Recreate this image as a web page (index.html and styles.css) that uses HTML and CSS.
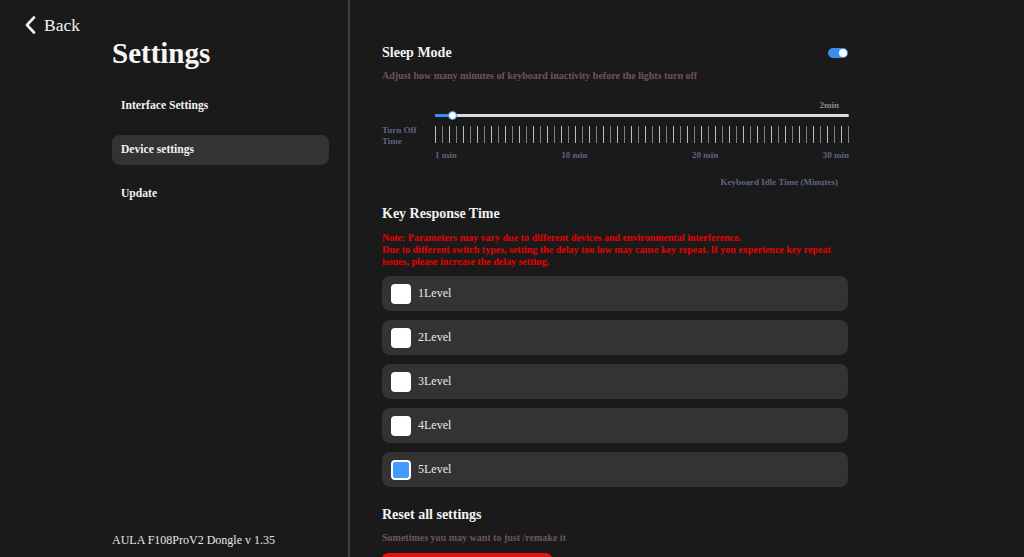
FILE: index.html
```html
<!DOCTYPE html>
<html lang="en">
<head>
<meta charset="utf-8">
<title>Settings</title>
<link rel="stylesheet" href="styles.css">
</head>
<body>
<div class="app">
  <aside class="sidebar">
    <a class="back">
      <svg class="back-icon" width="12" height="18" viewBox="0 0 12 18"><path d="M10 1.5 L3 9 L10 16.5" fill="none" stroke="#f2f2f2" stroke-width="2.6" stroke-linecap="round" stroke-linejoin="round"/></svg>
      <span>Back</span>
    </a>
    <div class="side-col">
      <h1 class="side-title">Settings</h1>
      <nav class="menu">
        <div class="menu-item">Interface Settings</div>
        <div class="menu-item active">Device settings</div>
        <div class="menu-item">Update</div>
      </nav>
    </div>
    <div class="version">AULA F108ProV2 Dongle v 1.35</div>
  </aside>
  <main class="content">
    <section class="section">
      <div class="section-head">
        <h2 class="section-title">Sleep Mode</h2>
        <div class="toggle on"><span class="knob"></span></div>
      </div>
      <p class="hint">Adjust how many minutes of keyboard inactivity before the lights turn off</p>
      <div class="slider-grid">
        <div></div>
        <div class="slider-value">2min</div>
        <div></div>
        <div class="track-row">
          <div class="track"><div class="track-fill"></div><div class="thumb"></div></div>
        </div>
        <div class="axis-label">Turn Off<br>Time</div>
        <div class="ticks"></div>
        <div></div>
        <div class="tick-labels"><span>1 min</span><span>10 min</span><span>20 min</span><span>30 min</span></div>
      </div>
      <div class="axis-caption">Keyboard Idle Time (Minutes)</div>
    </section>

    <section class="section krt">
      <h2 class="section-title">Key Response Time</h2>
      <p class="note">Note: Parameters may vary due to different devices and environmental interference.<br>Due to different switch types, setting the delay too low may cause key repeat. If you experience key repeat issues, please increase the delay setting.</p>
      <div class="levels">
        <label class="level"><span class="check"></span><span class="level-name">1Level</span></label>
        <label class="level"><span class="check"></span><span class="level-name">2Level</span></label>
        <label class="level"><span class="check"></span><span class="level-name">3Level</span></label>
        <label class="level"><span class="check"></span><span class="level-name">4Level</span></label>
        <label class="level"><span class="check checked"></span><span class="level-name">5Level</span></label>
      </div>
    </section>

    <section class="section reset">
      <h2 class="section-title">Reset all settings</h2>
      <p class="hint">Sometimes you may want to just /remake it</p>
      <button class="reset-btn"></button>
    </section>
  </main>
</div>
</body>
</html>
```

FILE: styles.css
```css
* { box-sizing: border-box; }
html, body {
  margin: 0;
  padding: 0;
  height: 557px;
  overflow: hidden;
  background: #1a1a1a;
  font-family: "Liberation Serif", "Times New Roman", serif;
  color: #f2f2f2;
}
.app {
  display: flex;
  height: 557px;
}
.sidebar {
  width: 350px;
  flex: none;
  border-right: 2px solid #3a3e46;
  display: flex;
  flex-direction: column;
  padding-top: 15px;
  padding-bottom: 10px;
}
.back {
  display: flex;
  align-items: center;
  gap: 8px;
  margin-left: 24px;
  height: 20px;
  font-size: 17.5px;
  color: #f2f2f2;
  cursor: pointer;
}
.back-icon { flex: none; }
.side-col {
  margin-left: 112px;
  width: 217px;
}
.side-title {
  margin: 0;
  font-size: 29px;
  line-height: 36px;
  font-weight: bold;
  color: #f7f7f7;
}
.menu {
  margin-top: 20px;
  display: flex;
  flex-direction: column;
  gap: 14px;
}
.menu-item {
  height: 30px;
  line-height: 30px;
  padding-left: 9px;
  font-size: 11.6px;
  font-weight: bold;
  border-radius: 8px;
  color: #f2f2f2;
}
.menu-item.active { background: #333333; }
.version {
  margin-top: auto;
  margin-left: 112px;
  font-size: 12px;
  line-height: 14px;
  color: #e6e6e6;
}

.content {
  flex: 1;
  padding: 43px 0 0 32px;
}
.section { width: 466px; }
.section-head {
  display: flex;
  align-items: center;
  justify-content: space-between;
  height: 20px;
}
.section-title {
  margin: 0;
  font-size: 14px;
  line-height: 20px;
  font-weight: bold;
  color: #f2f2f2;
}
.toggle {
  width: 20px;
  height: 10px;
  border-radius: 5px;
  background: #3b8eea;
  position: relative;
}
.toggle .knob {
  position: absolute;
  top: 1px;
  right: 1px;
  width: 8px;
  height: 8px;
  border-radius: 50%;
  background: #fff;
}
.hint {
  margin: 7px 0 0;
  font-size: 10px;
  line-height: 12px;
  font-weight: bold;
  color: #6e5656;
}
.slider-grid {
  display: grid;
  grid-template-columns: 53px 414px;
  margin-top: 17px;
}
.slider-value {
  text-align: right;
  padding-right: 10px;
  font-size: 9px;
  line-height: 12px;
  font-weight: bold;
  color: #8a8a8a;
}
.track-row {
  height: 9px;
  display: flex;
  align-items: center;
}
.track {
  position: relative;
  width: 100%;
  height: 3px;
  border-radius: 2px;
  background: #dcdcdc;
}
.track-fill {
  width: 18px;
  height: 3px;
  border-radius: 2px 0 0 2px;
  background: #3b8eea;
}
.thumb {
  position: absolute;
  left: 13px;
  top: -3px;
  width: 9px;
  height: 9px;
  border-radius: 50%;
  background: #fff;
  border: 1px solid #3b8eea;
}
.axis-label {
  margin-top: 5px;
  font-size: 9px;
  line-height: 11px;
  font-weight: bold;
  color: #5a6680;
}
.ticks {
  margin-top: 6px;
  height: 17px;
  background: repeating-linear-gradient(to right,
    #bdbdbd 0, #bdbdbd 1px, transparent 1px, transparent 7px,
    #808080 7px, #808080 8px, transparent 8px, transparent 14px);
}
.tick-labels {
  margin-top: 2px;
  display: flex;
  justify-content: space-between;
  font-size: 9px;
  line-height: 12px;
  font-weight: bold;
  color: #5a6680;
}
.axis-caption {
  margin-top: 15px;
  padding-right: 10px;
  text-align: right;
  font-size: 9px;
  line-height: 12px;
  font-weight: bold;
  color: #5a6680;
}
.krt { margin-top: 16px; }
.note {
  margin: 8px 0 0;
  font-size: 10px;
  line-height: 12px;
  font-weight: bold;
  color: #e60000;
}
.levels {
  margin-top: 8px;
  display: flex;
  flex-direction: column;
  gap: 9px;
}
.level {
  display: flex;
  align-items: center;
  height: 35px;
  padding-left: 9px;
  gap: 7px;
  border-radius: 8px;
  background: #333333;
}
.check {
  width: 20px;
  height: 20px;
  border-radius: 4px;
  background: #ffffff;
  flex: none;
}
.check.checked {
  background: #439bff;
  border: 2.5px solid #ffffff;
}
.level-name {
  font-size: 12px;
  color: #e8e8e8;
}
.reset { margin-top: 18px; }
.reset-btn {
  display: block;
  margin-top: 9px;
  width: 170px;
  height: 34px;
  border: none;
  border-radius: 6px;
  background: #e31313;
}
```
